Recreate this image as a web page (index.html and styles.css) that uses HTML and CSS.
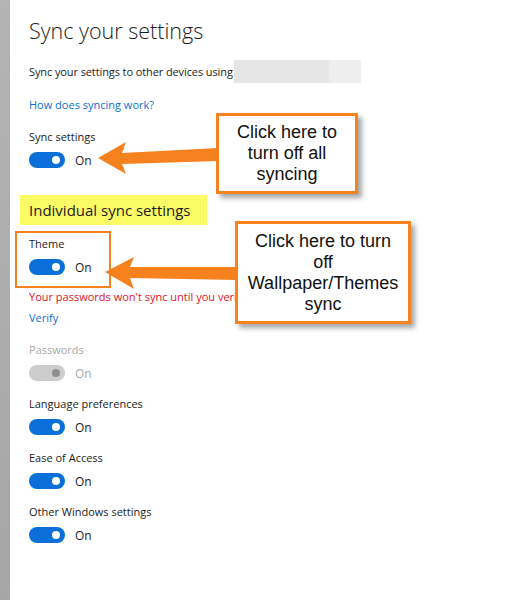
FILE: index.html
```html
<!DOCTYPE html>
<html lang="en">
  <head>
    <meta charset="UTF-8" />
    <meta name="viewport" content="width=device-width, initial-scale=1.0" />
    <title>Sync your settings</title>
    <link rel="stylesheet" href="styles.css">
  </head>
  <body>
    <div class="screen">
      <div class="edge"></div>

      <main class="panel">
        <h1>Sync your settings</h1>
        <div class="intro">
          <span>Sync your settings to other devices using</span>
          <span class="account"></span>
        </div>
        <a class="link how" href="#">How does syncing work?</a>

        <div class="setting">
          <div class="label">Sync settings</div>
          <div class="switch-row"><span class="switch"></span>On</div>
        </div>

        <h2 class="section">Individual sync settings</h2>

        <div class="setting boxed">
          <div class="label">Theme</div>
          <div class="switch-row"><span class="switch"></span>On</div>
        </div>

        <div class="warning">Your passwords won't sync until you verify your identity.</div>
        <a class="link verify" href="#">Verify</a>

        <div class="setting disabled">
          <div class="label">Passwords</div>
          <div class="switch-row"><span class="switch"></span>On</div>
        </div>
        <div class="setting">
          <div class="label">Language preferences</div>
          <div class="switch-row"><span class="switch"></span>On</div>
        </div>
        <div class="setting">
          <div class="label">Ease of Access</div>
          <div class="switch-row"><span class="switch"></span>On</div>
        </div>
        <div class="setting">
          <div class="label">Other Windows settings</div>
          <div class="switch-row"><span class="switch"></span>On</div>
        </div>
      </main>

      <!-- annotations drawn over the screenshot -->
      <svg class="arrows" width="505" height="600" viewBox="0 0 505 600">
        <polygon points="98,158 126,142 122,153 218,148 218,161 122,164 126,174" />
        <polygon points="105,272 134,257 130,267 237,267 237,280 130,278 134,289" />
      </svg>
      <div class="callout callout-all">Click here to<br>turn off all<br>syncing</div>
      <div class="callout callout-theme">Click here to turn<br>off<br>Wallpaper/Themes<br>sync</div>
    </div>
  </body>
</html>
```

FILE: styles.css
```css
body {
  margin: 0;
  font-family: "Open Sans", "Noto Sans", sans-serif;
  color: #1b1b1b;
  background: #fff;
}
.screen {
  position: relative;
  display: flex;
  width: 505px;
  height: 600px;
  overflow: hidden;
}
.edge {
  width: 10px;
  flex-shrink: 0;
  background: linear-gradient(#b4b4b4, #a6a6a6);
}
.panel {
  flex: 1;
  padding: 17px 0 0 19px;
  font-size: 11px;
}
h1 {
  margin: 0 0 15px;
  font-size: 21.5px;
  font-weight: 300;
  line-height: 28px;
}
.intro {
  display: flex;
  align-items: center;
  height: 23px;
  line-height: 16px;
  letter-spacing: -0.1px;
}
.account {
  width: 127px;
  height: 23px;
  margin-left: 1px;
  background: linear-gradient(90deg, #e6e6e6 75%, #eeeeee 75%);
}
.link {
  display: block;
  width: fit-content;
  color: #0a6fd0;
  text-decoration: none;
  line-height: 16px;
}
.how {
  margin: 14px 0 16px;
}
.setting {
  margin-bottom: 15px;
}
.label {
  line-height: 16px;
  margin-bottom: 7px;
}
.switch-row {
  display: flex;
  align-items: center;
  gap: 10px;
  height: 16px;
  font-size: 12px;
}
.switch {
  position: relative;
  width: 36px;
  height: 16px;
  border-radius: 8px;
  background: #0a6fd8;
}
.switch::after {
  content: "";
  position: absolute;
  top: 4px;
  right: 5px;
  width: 8px;
  height: 8px;
  border-radius: 50%;
  background: #fff;
}
.disabled {
  color: #a8a8a8;
}
.disabled .switch {
  background: #cdcdcd;
}
.disabled .switch::after {
  background: #8e8e8e;
}
.section {
  width: fit-content;
  margin: 27px 0 6px -9px;
  padding: 0 16px 0 9px;
  height: 30px;
  line-height: 30px;
  font-size: 15px;
  font-weight: 400;
  background: #fbfb66;
}
.boxed {
  box-sizing: border-box;
  width: 96px;
  margin: 0 0 1px -14px;
  padding: 3px 0 11px 12px;
  border: 2px solid #f5821f;
}
/* the second callout hides the end of this line */
.warning {
  width: 206px;
  overflow: hidden;
  color: #e3102a;
  line-height: 16px;
  white-space: nowrap;
}
.verify {
  margin: 5px 0 16px;
}
.arrows {
  position: absolute;
  left: 0;
  top: 0;
  pointer-events: none;
}
.arrows polygon {
  fill: #f5821f;
}
.callout {
  position: absolute;
  box-sizing: border-box;
  display: flex;
  align-items: center;
  justify-content: center;
  text-align: center;
  background: #fff;
  border: 3px solid #f5821f;
  box-shadow: 4px 4px 5px rgba(0, 0, 0, 0.35);
  font-family: "Liberation Sans", Arial, sans-serif;
  font-size: 18px;
  line-height: 21px;
  color: #111;
}
.callout-all {
  left: 216px;
  top: 113px;
  width: 142px;
  height: 81px;
}
.callout-theme {
  left: 235px;
  top: 221px;
  width: 176px;
  height: 103px;
}
```
